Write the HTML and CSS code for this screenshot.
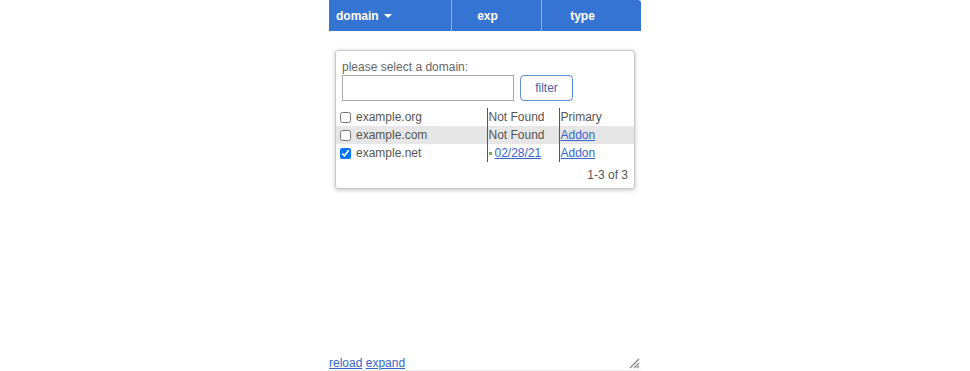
FILE: index.html
```html
<!DOCTYPE html>
<html lang="en">
<head>
  <meta charset="UTF-8">
  <title>Domains</title>
  <link rel="stylesheet" href="styles.css">
</head>
<body>
  <div class="panel">
    <div class="head">
      <div class="col col-domain">domain <span class="caret"></span></div>
      <div class="col col-exp">exp</div>
      <div class="col col-type">type</div>
    </div>
    <div class="body">
      <div class="picker">
        <label class="picker-label" for="domainFilter">please select a domain:</label>
        <div class="picker-search">
          <input id="domainFilter" type="text">
          <button class="btn">filter</button>
        </div>
        <table class="list">
          <tr>
            <td class="c-check"><input type="checkbox"></td>
            <td class="c-name">example.org</td>
            <td class="c-exp">Not Found</td>
            <td class="c-type">Primary</td>
          </tr>
          <tr class="alt">
            <td class="c-check"><input type="checkbox"></td>
            <td class="c-name">example.com</td>
            <td class="c-exp">Not Found</td>
            <td class="c-type"><a href="#">Addon</a></td>
          </tr>
          <tr>
            <td class="c-check"><input type="checkbox" checked></td>
            <td class="c-name">example.net</td>
            <td class="c-exp"><span class="dot"></span><a href="#">02/28/21</a></td>
            <td class="c-type"><a href="#">Addon</a></td>
          </tr>
        </table>
        <div class="count">1-3 of 3</div>
      </div>
    </div>
    <div class="foot">
      <div class="foot-links"><a href="#">reload</a> <a href="#">expand</a></div>
      <svg class="grip" width="12" height="12" viewBox="0 0 12 12">
        <path d="M11 2 L2 11 M11 6 L6 11 M11 9 L9 11" stroke="#888" stroke-width="1.3" fill="none"/>
      </svg>
    </div>
  </div>
</body>
</html>
```
FILE: styles.css
```css
* { box-sizing: border-box; }
body {
  margin: 0;
  font-family: 'Liberation Sans', Arial, sans-serif;
  font-size: 12px;
  color: #555;
  background: #fff;
}
a { color: #3565cf; }
.panel {
  width: 312px;
  height: 371px;
  margin: 0 auto;
  display: flex;
  flex-direction: column;
}
.head {
  display: flex;
  height: 31px;
  background: #3674d4;
  border-top-right-radius: 3px;
  color: #fff;
  font-weight: bold;
}
.col {
  display: flex;
  align-items: center;
  border-right: 1px solid #8fb0e4;
}
.col:last-child { border-right: none; }
.col-domain { width: 123px; padding-left: 7px; }
.col-exp { width: 90px; justify-content: center; padding-right: 18px; }
.col-type { flex: 1; justify-content: center; padding-right: 18px; }
.caret {
  display: inline-block;
  margin-left: 5px;
  border-left: 4px solid transparent;
  border-right: 4px solid transparent;
  border-top: 4px solid #fff;
}
.body { flex: 1; padding: 19px 6px 0; }
.picker {
  width: 300px;
  border: 1px solid #c8c8c8;
  border-radius: 3px;
  box-shadow: 0 1px 4px rgba(0,0,0,0.25);
  padding: 9px 0 6px;
}
.picker-label { display: block; padding-left: 6px; line-height: 15px; color: #666; }
.picker-search { display: flex; gap: 6px; padding: 0 6px; margin-bottom: 7px; }
.picker-search input {
  width: 172px;
  height: 26px;
  border: 1px solid #a9a9a9;
  margin: 0;
}
.btn {
  width: 53px;
  height: 26px;
  background: #fff;
  border: 1px solid #5a8ede;
  border-radius: 4px;
  color: #4a62a8;
  font: inherit;
  padding: 0;
}
.list { width: 100%; border-collapse: collapse; }
.list td { padding: 0; height: 18px; white-space: nowrap; }
.list tr.alt td { background: #e6e6e6; }
.c-check { width: 20px; padding-left: 4px !important; }
.c-check input { margin: 0; width: 11px; height: 11px; vertical-align: middle; }
.c-name { width: 131px; }
.c-exp { width: 72px; border-left: 1px solid #555; padding-left: 1px !important; }
.c-type { border-left: 1px solid #555; padding-left: 1px !important; }
.dot {
  display: inline-block;
  width: 3px;
  height: 3px;
  background: #6bc04b;
  margin-right: 3px;
  vertical-align: middle;
}
.count { text-align: right; padding: 6px 6px 0; color: #555; }
.foot {
  display: flex;
  justify-content: space-between;
  align-items: center;
  height: 22px;
  padding-top: 6px;
  border-bottom: 1px solid #eee;
}
.grip { margin-right: 1px; }
```
